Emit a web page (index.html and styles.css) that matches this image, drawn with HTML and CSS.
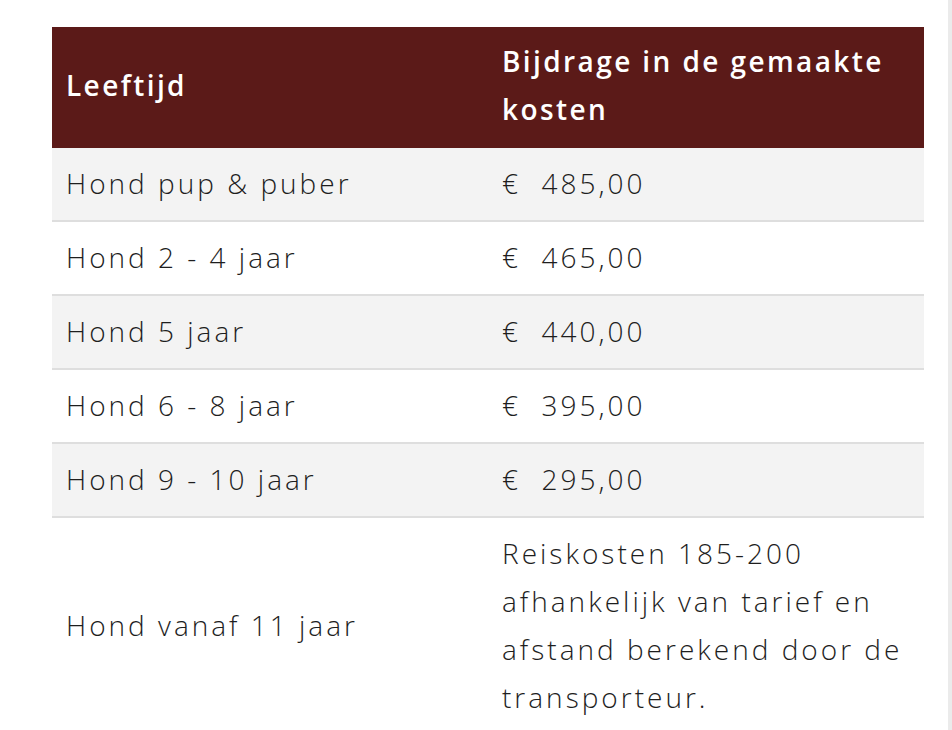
FILE: index.html
```html
<!DOCTYPE html>
<html lang="nl">
<head>
<meta charset="utf-8">
<link rel="stylesheet" href="styles.css">
</head>
<body>
<div class="page">
  <main class="content">
    <table class="prices">
      <thead>
        <tr><th>Leeftijd</th><th>Bijdrage in de gemaakte kosten</th></tr>
      </thead>
      <tbody>
        <tr><td>Hond pup &amp; puber</td><td>€&nbsp; 485,00</td></tr>
        <tr><td>Hond 2 - 4 jaar</td><td>€&nbsp; 465,00</td></tr>
        <tr><td>Hond 5 jaar</td><td>€&nbsp; 440,00</td></tr>
        <tr><td>Hond 6 - 8 jaar</td><td>€&nbsp; 395,00</td></tr>
        <tr><td>Hond 9 - 10 jaar</td><td>€&nbsp; 295,00</td></tr>
        <tr><td>Hond vanaf 11 jaar</td><td>Reiskosten 185-200 afhankelijk van tarief en afstand berekend door de transporteur.</td></tr>
      </tbody>
    </table>
  </main>
  <div class="rail"></div>
</div>
</body>
</html>
```
FILE: styles.css
```css
html, body {
  margin: 0;
  padding: 0;
  background: #ffffff;
  overflow: hidden;
}
.page {
  display: flex;
  height: 730px;
}
.content {
  flex: 1;
  padding: 27px 24px 0 52px;
}
.rail {
  width: 4px;
  background: #ebebeb;
}
.prices {
  width: 872px;
  border-collapse: collapse;
  table-layout: fixed;
  font-family: "Open Sans", "Noto Sans", sans-serif;
  font-weight: 300;
  font-size: 28px;
  letter-spacing: 3px;
  line-height: 48px;
  color: #1e1e1e;
}
.prices th {
  background: #5b1a18;
  color: #ffffff;
  font-weight: 600;
  letter-spacing: 2.4px;
  text-align: left;
  vertical-align: middle;
  padding: 10px 14px 15px;
  width: 50%;
}
.prices td {
  padding: 11px 14px 13px;
  vertical-align: middle;
  border-bottom: 2px solid #dedede;
}
.prices tbody tr:nth-child(odd) td {
  background: #f3f3f3;
}
.prices tbody tr:nth-child(even) td {
  background: #ffffff;
}
.prices tbody tr:last-child td {
  border-bottom: none;
}
```
